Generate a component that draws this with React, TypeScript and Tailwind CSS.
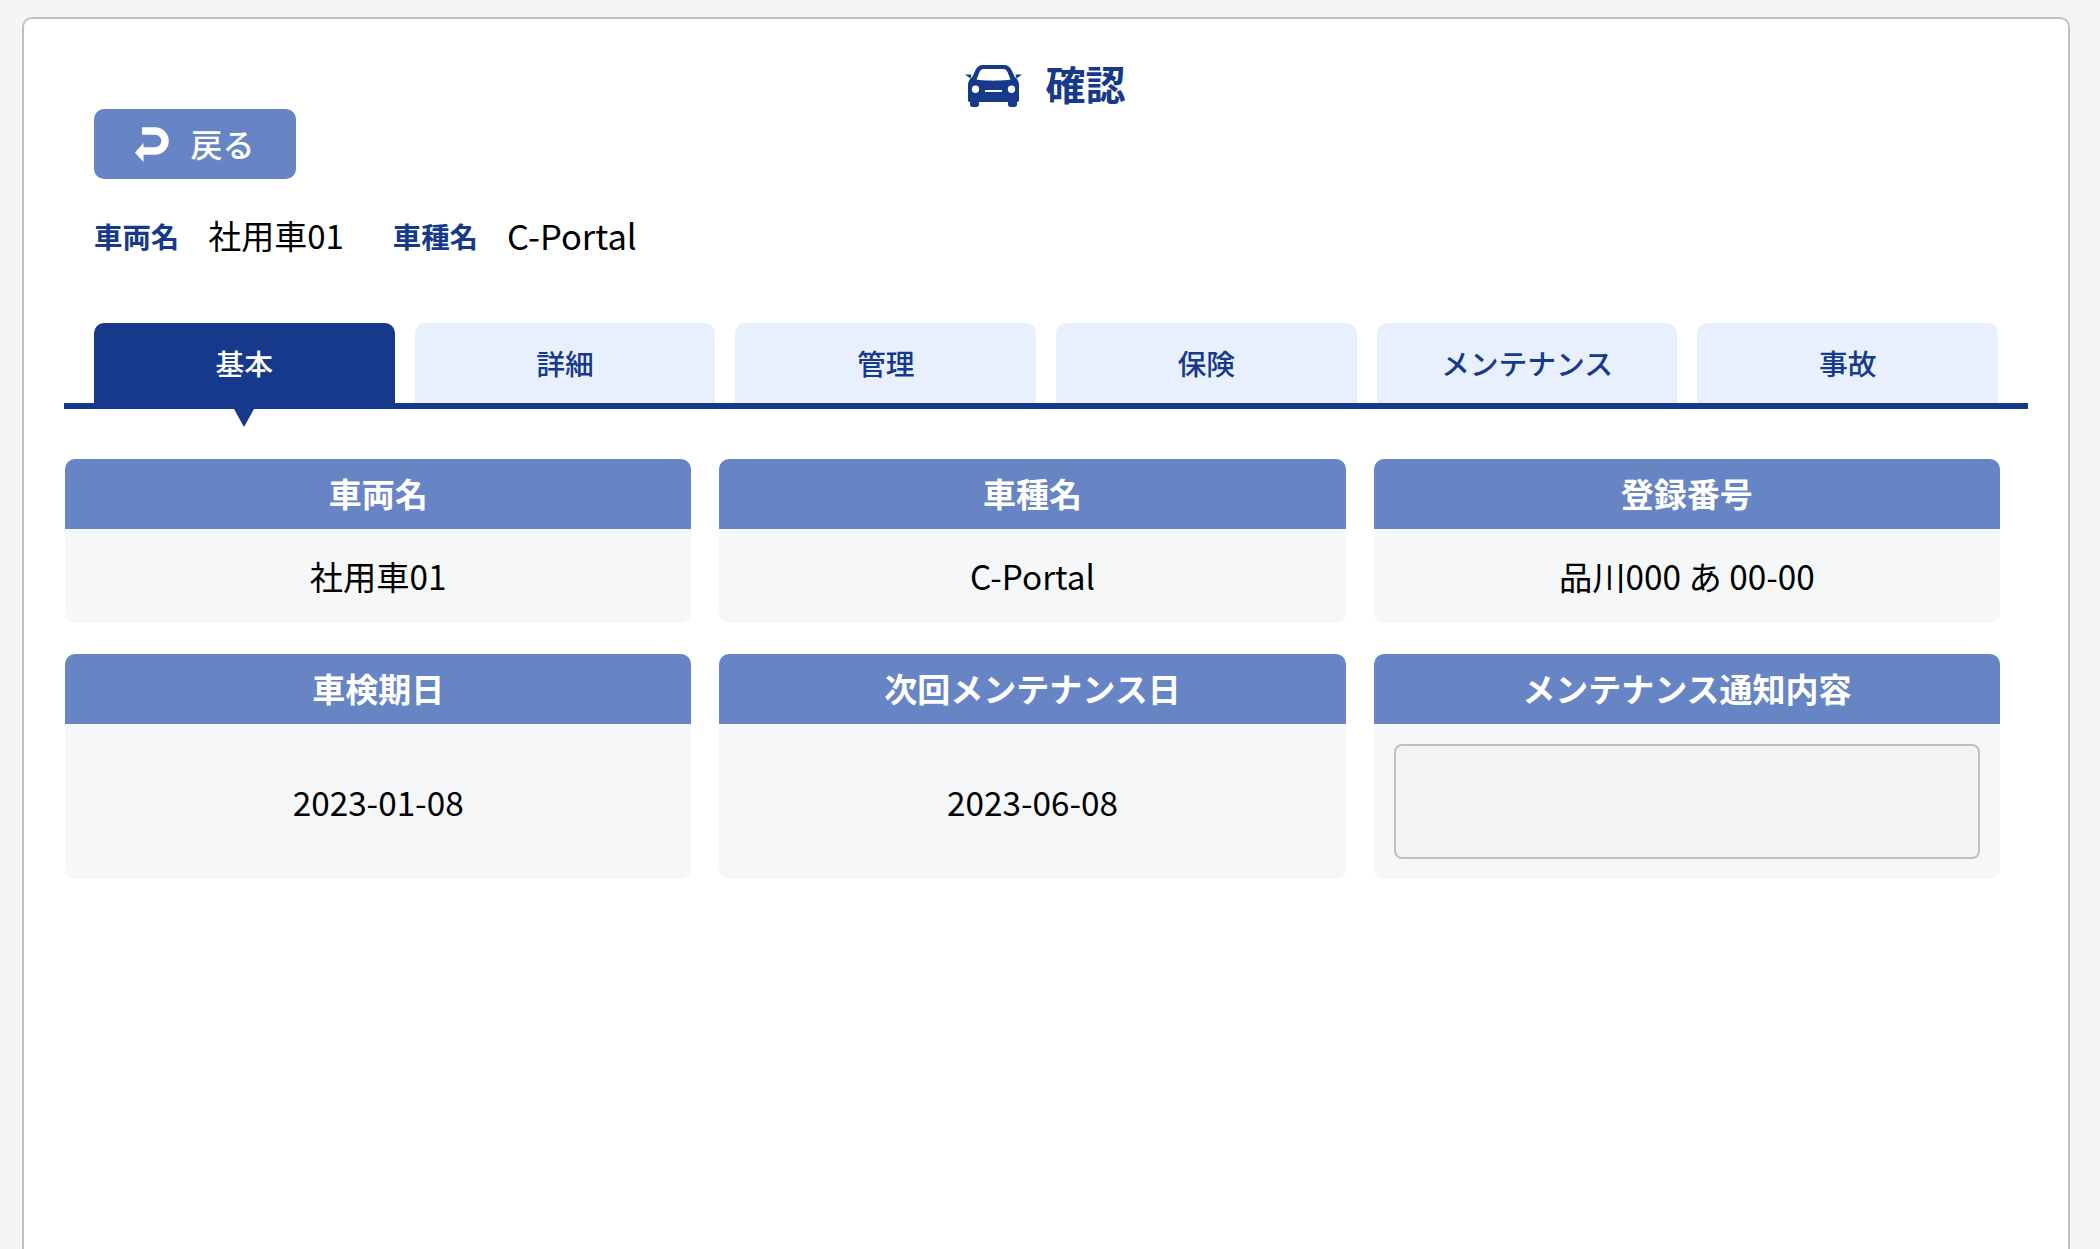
import React from 'react';

const tabs = ['基本', '詳細', '管理', '保険', 'メンテナンス', '事故'];

const CarIcon = () => (
  <svg width="57" height="42" viewBox="0 0 57 42" className="shrink-0">
    <path
      fill="#17398c"
      fillRule="evenodd"
      d="M18 0H39C43 0 45 2 46.500 5L49.500 11.500L52 14C53.500 16 54 18 54 21V35C54 36.500 53.300 37 52 37V39.500C52 41 51 42 49.500 42H45.500C44 42 43 41 43 39.500V37H14V39.500C14 41 13 42 11.500 42H7.500C6 42 5 41 5 39.500V37C3.700 37 3 36.500 3 35V21C3 18 3.500 16 5 14L7.500 11.500L10.500 5C12 2 14 0 18 0ZM19 4C16.500 4 15.500 5 14.500 7L11.500 14.500C18 16 39 16 45.500 14.500L42.500 7C41.500 5 40.500 4 38 4ZM10.500 20.500A3.700 3.700 0 1 0 10.500 27.900A3.700 3.700 0 1 0 10.500 20.500ZM46.500 20.500A3.700 3.700 0 1 0 46.500 27.900A3.700 3.700 0 1 0 46.500 20.500ZM20 25V27H37V25Z"
    />
    <path fill="#17398c" d="M0 9.500H6.500L5.500 13.500ZM57 9.500H50.500L51.500 13.500Z" />
  </svg>
);

const BackIcon = () => (
  <svg width="36" height="36" viewBox="0 0 36 36" className="shrink-0">
    <path d="M7 5H20A10 10 0 0 1 20 25H7" fill="none" stroke="#ffffff" strokeWidth="7.5" />
    <path d="M0 26.500L8.500 17V36Z" fill="#ffffff" />
  </svg>
);

const Cell = ({
  title,
  value,
  tall,
}: {
  title: string;
  value?: string;
  tall?: boolean;
}) => (
  <div className="rounded-[10px] overflow-hidden bg-[#f6f7f9] flex flex-col">
    <div className="h-[70px] bg-[#6785c5] text-white text-[33px] font-bold flex items-center justify-center">
      {title}
    </div>
    {value !== undefined ? (
      <div
        className={`flex items-center justify-center text-[33.3px] text-black ${tall ? 'h-[155px]' : 'h-[94px]'}`}
      >
        {value}
      </div>
    ) : (
      <div className="h-[155px] p-5">
        <div className="h-full rounded-[8px] border-2 border-[#c0c0c0] bg-[#f3f4f6]" />
      </div>
    )}
  </div>
);

export default function App() {
  return (
    <div className="h-screen overflow-hidden bg-[#f4f5f7] pt-[17px] pl-[22px] pr-[30px] font-['Noto_Sans_CJK_JP','Noto_Sans',sans-serif]">
      <div className="h-[1300px] bg-white rounded-t-[10px] border-2 border-[#c0c0c0] px-[40px]">
        <div className="pt-[46px] pr-[2px] h-[90px] flex items-start justify-center gap-[24px]">
          <CarIcon />
          <h1 className="-mt-[3px] text-[40px] leading-[42px] font-bold text-[#17398c]">確認</h1>
        </div>
        <div className="pl-[30px]">
          <button className="w-[202px] h-[70px] rounded-[10px] bg-[#6785c5] text-white text-[32px] font-medium flex items-center justify-center gap-[19px]">
            <BackIcon />
            <span className="leading-none -mt-[2px]">戻る</span>
          </button>
          <div className="mt-[34px] h-[46px] flex items-center">
            <span className="text-[28.4px] font-bold text-[#17398c]">車両名</span>
            <span className="ml-[29px] text-[33px] text-black">社用車01</span>
            <span className="ml-[49px] text-[28.4px] font-bold text-[#17398c]">車種名</span>
            <span className="ml-[29px] text-[34.5px] text-black">C-Portal</span>
          </div>
        </div>
        <div className="mt-[64px] border-b-[6px] border-[#17398c] px-[30px] flex gap-[20px]">
          {tabs.map((t, i) => (
            <div
              key={t}
              className={`relative flex-1 h-[80px] rounded-t-[10px] flex items-center justify-center text-[28.8px] font-medium ${
                i === 0 ? 'bg-[#17398c] text-white' : 'bg-[#e8f0fe] text-[#17398c]'
              }`}
            >
              {t}
              {i === 0 && (
                <span className="absolute left-1/2 -translate-x-1/2 top-[86px] w-0 h-0 border-x-[10px] border-x-transparent border-t-[18px] border-t-[#17398c]" />
              )}
            </div>
          ))}
        </div>
        <div className="mt-[50px] ml-px w-[1935px] grid grid-cols-3 gap-x-[28px] gap-y-[31px]">
          <Cell title="車両名" value="社用車01" />
          <Cell title="車種名" value="C-Portal" />
          <Cell title="登録番号" value="品川000 あ 00-00" />
          <Cell title="車検期日" value="2023-01-08" tall />
          <Cell title="次回メンテナンス日" value="2023-06-08" tall />
          <Cell title="メンテナンス通知内容" />
        </div>
      </div>
    </div>
  );
}
